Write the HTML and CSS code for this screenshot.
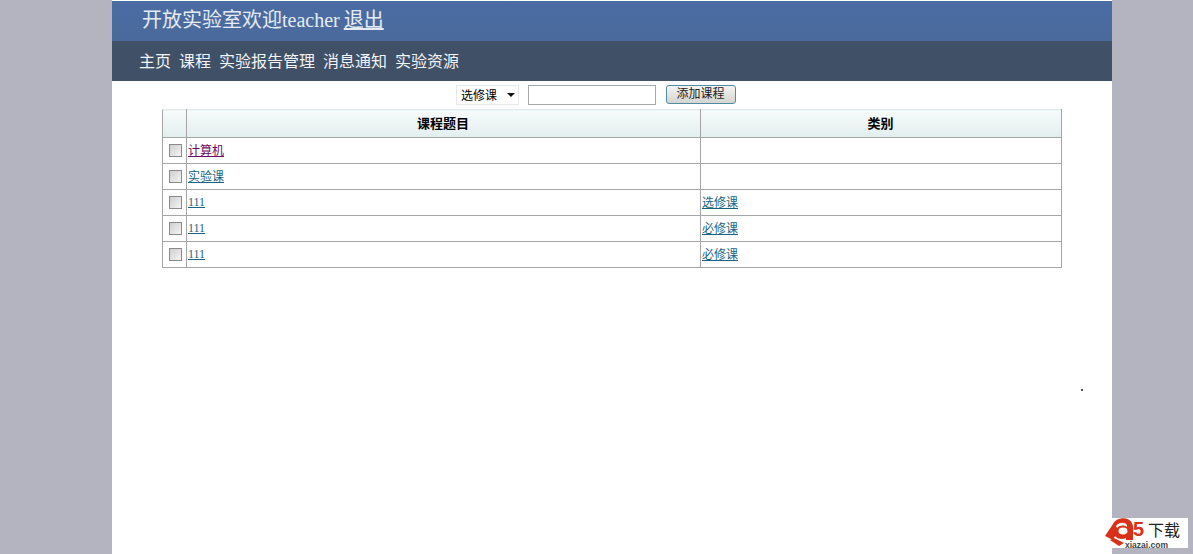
FILE: index.html
```html
<!DOCTYPE html>
<html lang="zh">
<head>
<meta charset="utf-8">
<title>开放实验室</title>
<link rel="stylesheet" href="styles.css">
</head>
<body>
<div class="page">
  <header class="top">开放实验室欢迎teacher <a href="#">退出</a></header>
  <nav class="nav">
    <a href="#">主页</a><a href="#">课程</a><a href="#">实验报告管理</a><a href="#">消息通知</a><a href="#">实验资源</a>
  </nav>
  <form class="toolbar">
    <span class="select">选修课<svg class="arrow" width="8" height="4" viewBox="0 0 8 4"><path d="M0 0h8L4 4z" fill="#111"/></svg></span>
    <span class="field"></span>
    <span class="button">添加课程</span>
  </form>
  <table class="grid">
    <thead>
      <tr><th class="c1"></th><th class="c2">课程题目</th><th>类别</th></tr>
    </thead>
    <tbody>
      <tr><td class="check"><span class="box"></span></td><td><a class="visited" href="#">计算机</a></td><td></td></tr>
      <tr><td class="check"><span class="box"></span></td><td><a href="#">实验课</a></td><td></td></tr>
      <tr><td class="check"><span class="box"></span></td><td><a class="num" href="#">111</a></td><td><a href="#">选修课</a></td></tr>
      <tr><td class="check"><span class="box"></span></td><td><a class="num" href="#">111</a></td><td><a href="#">必修课</a></td></tr>
      <tr><td class="check"><span class="box"></span></td><td><a class="num" href="#">111</a></td><td><a href="#">必修课</a></td></tr>
    </tbody>
  </table>
</div>
<span class="speck"></span>
<div class="logo">
  <svg class="logo-a" width="30" height="30" viewBox="0 0 30 30">
    <path d="M0 20 L8 8 C11 1 24 0 27 7 C29 11 28 18 28 24 L21 24 L21 22 C17 24 12 23 10 20 L8 24 Z" fill="#d9301a"/>
    <path d="M5 24 L9 22 L19 27 L14 30 Z" fill="#d9301a"/>
    <ellipse cx="18" cy="15" rx="4.5" ry="3.4" fill="#fff"/>
    <path d="M11 10 C14 6 20 6 22 9 L22 11 C19 9 15 9 12 12 Z" fill="#fff"/>
  </svg>
  <span class="logo-five">5</span>
  <span class="logo-cn">下载</span>
  <span class="logo-url">xiazai.com</span>
</div>
</body>
</html>
```
FILE: styles.css
```css
html, body {
  margin: 0;
  height: 100%;
  overflow: hidden;
}
body {
  background: #b4b4c0;
  font-family: "Liberation Serif", "Noto Sans CJK SC", serif;
  color: #000;
}
.page {
  width: 1000px;
  height: 554px;
  margin-left: 112px;
  background: #fff;
  box-sizing: border-box;
  padding-top: 1px;
}
.top {
  height: 40px;
  box-sizing: border-box;
  padding-left: 30px;
  line-height: 39px;
  font-size: 20px;
  word-spacing: -1px;
  color: #e6ebf2;
  background: linear-gradient(#4a6ca3, #4b6a9c);
}
.top a {
  color: #e6ebf2;
}
.nav {
  height: 40px;
  display: flex;
  gap: 8px;
  padding-left: 27px;
  line-height: 41px;
  font-size: 16px;
  background: #3f5067;
}
.nav a {
  color: #f2f4f6;
  text-decoration: none;
}
.toolbar {
  height: 28px;
  display: flex;
  align-items: center;
  padding-left: 344px;
  font-size: 12px;
}
.select {
  width: 63px;
  height: 20px;
  box-sizing: border-box;
  display: flex;
  align-items: center;
  justify-content: space-between;
  padding: 0 3px 0 4px;
  border: 1px solid #e8e8e8;
  margin-right: 9px;
}
.arrow {
  flex: none;
}
.field {
  width: 128px;
  height: 20px;
  box-sizing: border-box;
  border: 1px solid #a8a8a8;
  margin-right: 10px;
}
.button {
  width: 70px;
  height: 19px;
  box-sizing: border-box;
  padding-right: 1px;
  text-align: center;
  line-height: 16px;
  color: #222;
  border: 1px solid #4f8ba6;
  border-radius: 3px;
  background: linear-gradient(#f4f4f2, #d4d4d0);
  margin-top: -1px;
}
.grid {
  width: 900px;
  margin-left: 50px;
  border-collapse: collapse;
  table-layout: fixed;
  font-size: 12px;
}
.grid th, .grid td {
  border: 1px solid #a5a5a5;
  padding: 0 0 2px 1px;
}
.grid thead tr {
  height: 28px;
}
.grid tbody tr {
  height: 26px;
}
.grid thead th {
  border-top-color: #e4e8e8;
  background: linear-gradient(#f7fbfb, #e2eeee);
  font-size: 13px;
  font-weight: bold;
  text-align: center;
  padding: 0 1px 2px 0;
}
.c1 {
  width: 22px;
}
.c2 {
  width: 512px;
}
.grid a {
  color: #1c6382;
}
.grid a.visited {
  color: #6a0a60;
}
.grid a.num {
  vertical-align: -1px;
}
.grid .check {
  padding-bottom: 0;
  text-align: center;
}
.box {
  display: block;
  width: 13px;
  height: 13px;
  margin: 0 auto;
  box-sizing: border-box;
  border: 1px solid #8a8a8a;
  background: linear-gradient(135deg, #cfcfcf, #f4f4f4);
}
.speck {
  position: absolute;
  left: 1081px;
  top: 389px;
  width: 2px;
  height: 2px;
  background: #555;
}
.logo {
  position: absolute;
  left: 1105px;
  top: 518px;
  width: 83px;
  height: 30px;
  font-family: "Liberation Sans", "Noto Sans CJK SC", sans-serif;
}
.logo::before {
  content: "";
  position: absolute;
  left: 7px;
  top: 0;
  right: 0;
  bottom: 0;
  background: #fff;
}
.logo-a {
  position: absolute;
  left: 0;
  top: -2px;
}
.logo-five {
  position: absolute;
  left: 28px;
  top: 3px;
  font-size: 20px;
  line-height: 16px;
  font-weight: bold;
  color: #d9301a;
}
.logo-cn {
  position: absolute;
  left: 43px;
  top: 5px;
  font-size: 16px;
  line-height: 16px;
  color: #222;
}
.logo-url {
  position: absolute;
  left: 20px;
  top: 24px;
  font-size: 8.5px;
  line-height: 7px;
  font-weight: bold;
  color: #444;
}
```
